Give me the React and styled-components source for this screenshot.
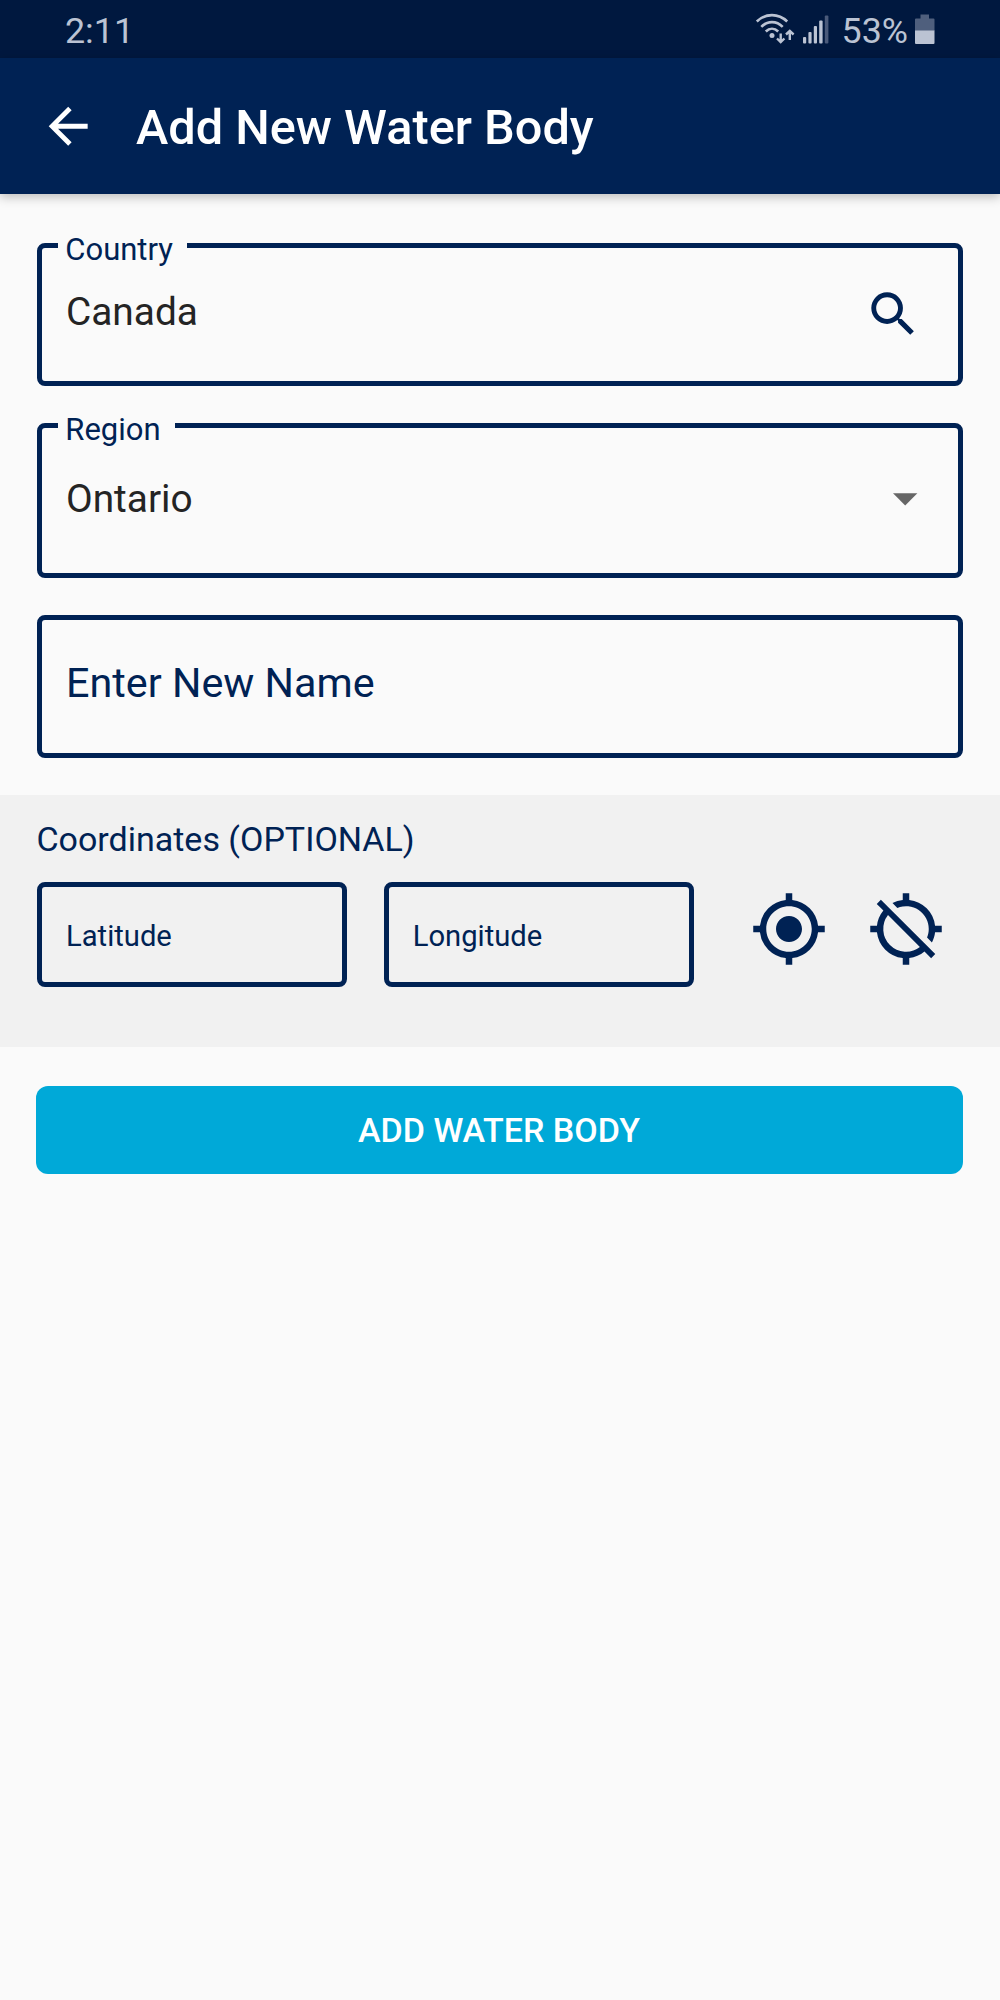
import { useState } from 'react';
import styled, { createGlobalStyle } from 'styled-components'
import { MdArrowBack, MdSearch, MdArrowDropDown, MdGpsFixed, MdGpsOff } from 'react-icons/md'

const navy = '#002254';

export default () => {
    let [coords, setCoords] = useState({ lat: '', lng: '' });
    return (
        <Screen>
            <GlobalStyle />
            <StatusBar>
                <StatusText>2:11</StatusText>
                <StatusRight>
                    <WifiIcon />
                    <SignalIcon />
                    <StatusText>53%</StatusText>
                    <BatteryIcon />
                </StatusRight>
            </StatusBar>
            <AppBar>
                <MdArrowBack size={58.4} />
                <Title>Add New Water Body</Title>
            </AppBar>
            <Form>
                <Field height={143} pad={37}>
                    <Label>Country</Label>
                    <Value line={54}>Canada</Value>
                    <MdSearch size={58.4} color={navy} />
                </Field>
                <Field height={155} pad={41} side={24}>
                    <Label>Region</Label>
                    <Value line={60}>Ontario</Value>
                    <MdArrowDropDown size={58.4} color="#666666" />
                </Field>
                <Field height={143} pad={37}>
                    <Placeholder>Enter New Name</Placeholder>
                </Field>
            </Form>
            <Coordinates>
                <Heading>Coordinates (OPTIONAL)</Heading>
                <CoordRow>
                    <SmallField>{coords.lat || 'Latitude'}</SmallField>
                    <SmallField>{coords.lng || 'Longitude'}</SmallField>
                    <IconButtons>
                        <IconButton><MdGpsFixed size={78} /></IconButton>
                        <IconButton onClick={() => setCoords({ lat: '', lng: '' })}><MdGpsOff size={78} /></IconButton>
                    </IconButtons>
                </CoordRow>
            </Coordinates>
            <Submit>ADD WATER BODY</Submit>
        </Screen>
    )
}

const WifiIcon = () => (
    <svg width="40" height="32" viewBox="0 0 40 32" fill="none" stroke="#bbc3d3" strokeWidth="2.6">
        <path d="M1.8 9.5C10.5 1 23.5 1 32.2 9.5" />
        <path d="M6.3 14.8C12.5 8.5 21.5 8.5 27.7 14.8" />
        <path d="M10.8 19.5C14.5 15.8 19.5 15.8 23.2 19.5" />
        <circle cx="17" cy="23.5" r="2.5" fill="#bbc3d3" stroke="none" />
        <path d="M25.7 21.5v8M22 26.5l3.7 3.5 3.7-3.5M34.8 28v-8M31 22.5l3.8-3.5 3.8 3.5" strokeWidth="2.4" />
    </svg>
)

const SignalIcon = () => (
    <svg width="26" height="32" viewBox="0 0 26 32" fill="#bbc3d3">
        <rect x="0" y="25" width="3.2" height="6.5" rx="1" />
        <rect x="5.4" y="20" width="3.2" height="11.5" rx="1" />
        <rect x="10.8" y="14" width="3.2" height="17.5" rx="1" />
        <rect x="16.2" y="8.5" width="3.4" height="23" rx="1" />
        <rect x="21.8" y="3.5" width="3.6" height="28" rx="1" fill="#4a5a7a" />
    </svg>
)

const BatteryIcon = () => (
    <svg width="20" height="32" viewBox="0 0 20 32">
        <path d="M5.5 2.5H14v4h4.500a1 1 0 0 1 1 1V19H0V7.500a1 1 0 0 1 1-1h4.500z" fill="#4f5f7d" />
        <path d="M0 18.500h19.500V31a1 1 0 0 1-1 1H1a1 1 0 0 1-1-1z" fill="#bbc3d3" />
    </svg>
)

const GlobalStyle = createGlobalStyle`
body{
    margin:0;
    background:#fafafa;
}
*{
    box-sizing:border-box;
}
`
const Screen = styled.div`
width:1000px;
height:2000px;
display:flex;
flex-direction:column;
background:#fafafa;
font-family:Roboto, sans-serif;
overflow:hidden;
svg{
    flex:none;
    display:block;
}
`
const StatusBar = styled.div`
display:flex;
justify-content:space-between;
height:58px;
padding:0px 65px 0px 65px;
background:#00183f;
`
const StatusText = styled.span`
font-size:35.8px;
line-height:63px;
color:#bbc3d3;
`
const StatusRight = styled.div`
display:flex;
svg{
    margin-top:12px;
}
svg:nth-child(2){
    margin:12px 13px 0px 7.5px;
}
svg:last-child{
    margin-left:7px;
}
`
const AppBar = styled.div`
display:flex;
align-items:center;
gap:38.6px;
height:136px;
padding-left:39px;
color:#ffffff;
background:${navy};
box-shadow:0px 3px 10px rgba(0,0,0,0.25);
`
const Title = styled.h1`
margin:4px 0px 0px;
font-size:48.7px;
line-height:58px;
font-weight:500;
`
const Form = styled.div`
display:flex;
flex-direction:column;
gap:37px;
padding:49px 37px 37px;
`
const Field = styled.div`
position:relative;
display:flex;
justify-content:space-between;
align-items:flex-start;
height:${props => props.height}px;
padding:${props => props.pad}px ${props => props.side || 36}px 0px 24px;
border:5px solid ${navy};
border-radius:8px;
`
const Label = styled.span`
position:absolute;
top:-16px;
left:16px;
padding:0px 14px 0px 7.300px;
font-size:31px;
line-height:36px;
color:${navy};
background:#fafafa;
`
const Value = styled.span`
font-size:38.8px;
line-height:${props => props.line}px;
color:#242424;
`
const Placeholder = styled.span`
font-size:41.3px;
line-height:52px;
color:${navy};
`
const Coordinates = styled.div`
height:252px;
padding:22px 37px 0px;
color:${navy};
background:#f1f1f1;
`
const Heading = styled.div`
margin-left:-0.6px;
font-size:34px;
line-height:44px;
`
const CoordRow = styled.div`
display:flex;
gap:36.7px;
margin-top:21px;
`
const SmallField = styled.div`
width:310px;
height:105px;
padding-left:24px;
border:5px solid ${navy};
border-radius:8px;
font-size:29.2px;
line-height:98px;
`
const IconButtons = styled.div`
display:flex;
align-items:flex-start;
gap:38.6px;
margin:7.5px 0px 0px 19.6px;
`
const IconButton = styled.button`
padding:0px;
border:none;
background:none;
color:${navy};
`
const Submit = styled.button`
height:88px;
margin:39px 37px 0px 36px;
padding:0px 1px 0px 0px;
border:none;
border-radius:12px;
font-family:inherit;
font-size:34px;
font-weight:500;
color:#ffffff;
background:#00a9d8;
`
